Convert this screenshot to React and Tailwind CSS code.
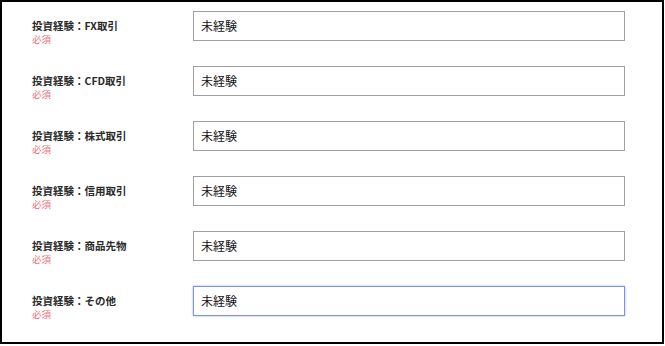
import React from 'react';

const rows = [
  { label: '投資経験：FX取引', value: '未経験' },
  { label: '投資経験：CFD取引', value: '未経験' },
  { label: '投資経験：株式取引', value: '未経験' },
  { label: '投資経験：信用取引', value: '未経験' },
  { label: '投資経験：商品先物', value: '未経験' },
  { label: '投資経験：その他', value: '未経験', focused: true },
];

export default function App() {
  return (
    <div
      className="w-[664px] h-[344px] border-2 border-black bg-white"
      style={{ fontFamily: '"Noto Sans CJK JP", "Noto Sans", sans-serif' }}
    >
      <div className="flex flex-col pt-[9px]">
        {rows.map((r) => (
          <div key={r.label} className="flex items-start h-[55px]">
            <div className="w-[191px] pl-[30px] pt-[9px]">
              <div className="text-[10.5px] leading-[12px] font-semibold text-[#2a2a2a]">{r.label}</div>
              <div className="mt-[2px] text-[9.5px] leading-[11px] text-[#ec6f7a]">必須</div>
            </div>
            <div
              className={
                r.focused
                  ? 'w-[432px] h-[30px] border border-[#7d92e8] shadow-[0_0_2px_#9aabf0] flex items-center px-[7px] text-[12px] text-[#111]'
                  : 'w-[432px] h-[30px] border border-[#a0a0a0] flex items-center px-[7px] text-[12px] text-[#111]'
              }
            >
              {r.value}
            </div>
          </div>
        ))}
      </div>
    </div>
  );
}
